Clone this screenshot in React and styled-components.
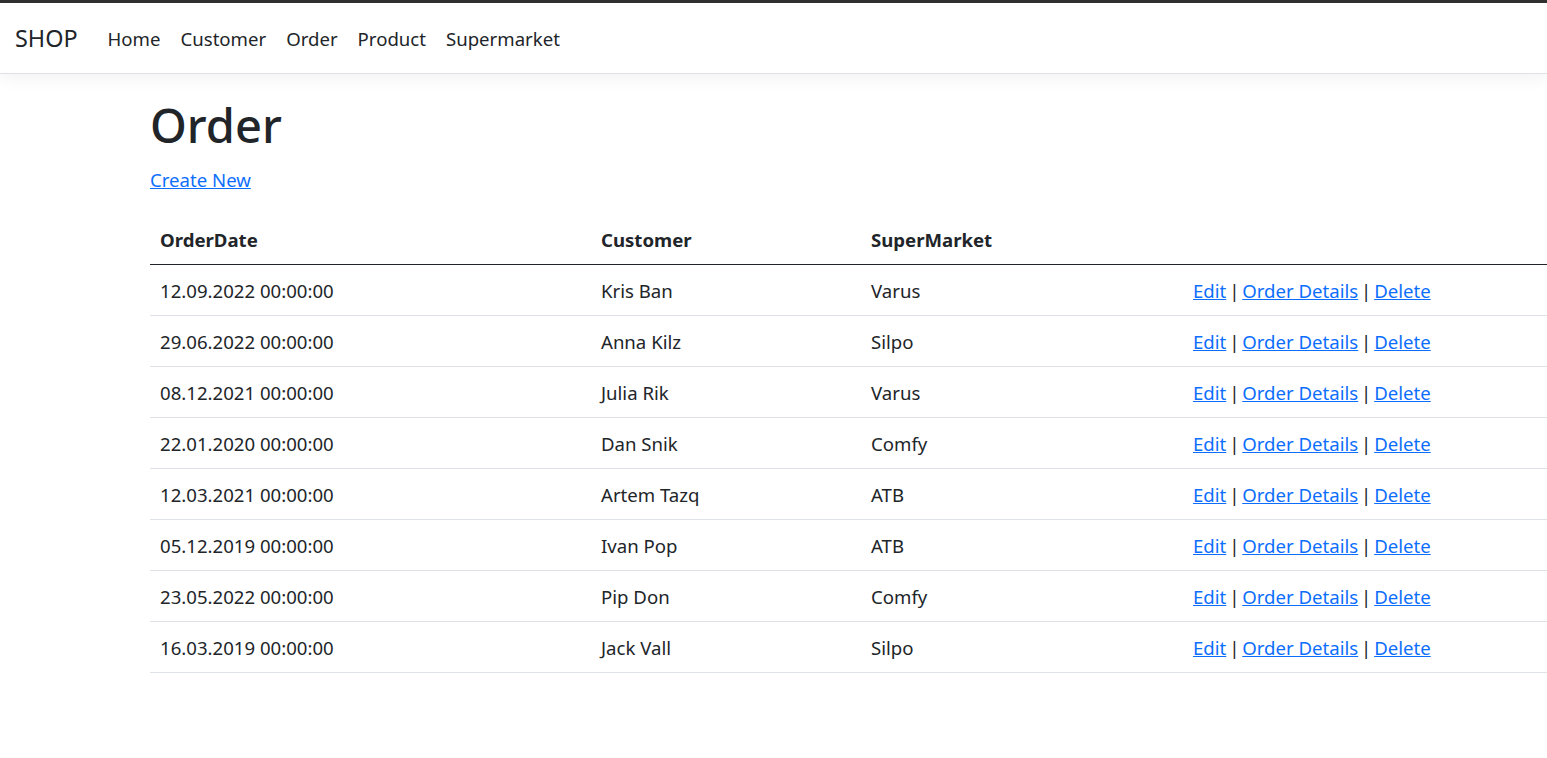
import React from "react";
import styled, { createGlobalStyle } from "styled-components";

const GlobalStyle = createGlobalStyle`
  html, body {
    margin: 0;
    padding: 0;
    background: #fff;
  }
  *, *::before, *::after {
    box-sizing: border-box;
  }
  body {
    font-family: "Segoe UI", "Noto Sans", "Open Sans", sans-serif;
    font-size: 18.6px;
    line-height: 30px;
    color: #212529;
    border-top: 3px solid #2f2f2f;
  }
`

const Navbar = styled.header`
  display: flex;
  align-items: center;
  height: 71px;
  padding: 1px 15px 0;
  background: #fff;
  border-bottom: 1px solid #dee2e6;
  box-shadow: 0 5px 15px rgba(0, 0, 0, 0.05);
  margin-bottom: 20px;
`

const Brand = styled.a`
  font-size: 23.4px;
  line-height: 37px;
  color: #212529;
  text-decoration: none;
  margin-right: 20px;
`

const NavList = styled.nav`
  display: flex;
  flex-direction: row;
`

const NavLink = styled.a`
  padding: 10px;
  color: #212529;
  text-decoration: none;
`

const Main = styled.main`
  padding-left: 150px;
  padding-top: 1px;
`

const Title = styled.h1`
  margin: 0 0 10px;
  font-size: 47px;
  font-weight: 500;
  line-height: 60px;
`

const Para = styled.p`
  margin: 0 0 20px;
`

const Link = styled.a`
  color: #0d6efd;
  text-decoration: underline;
  word-spacing: normal;
  cursor: pointer;
`

const Table = styled.table`
  width: 100%;
  border-collapse: collapse;
  table-layout: fixed;
`

const Th = styled.th`
  text-align: left;
  font-weight: 700;
  padding: 10px 10px 9px;
  width: ${p => p.$w || "auto"};
  border-bottom: 1px solid #212529;
`

const Td = styled.td`
  padding: 11px 10px 9px;
  border-bottom: 1px solid #dee2e6;
  vertical-align: top;
  white-space: nowrap;
  word-spacing: ${p => (p.$actions ? "-2px" : "normal")};
`

const Sep = styled.span`
  color: #212529;
`

const orders = [
  ["12.09.2022 00:00:00", "Kris Ban", "Varus"],
  ["29.06.2022 00:00:00", "Anna Kilz", "Silpo"],
  ["08.12.2021 00:00:00", "Julia Rik", "Varus"],
  ["22.01.2020 00:00:00", "Dan Snik", "Comfy"],
  ["12.03.2021 00:00:00", "Artem Tazq", "ATB"],
  ["05.12.2019 00:00:00", "Ivan Pop", "ATB"],
  ["23.05.2022 00:00:00", "Pip Don", "Comfy"],
  ["16.03.2019 00:00:00", "Jack Vall", "Silpo"],
]

export default function App() {
  return (
    <>
      <GlobalStyle />
      <Navbar>
        <Brand href="#">SHOP</Brand>
        <NavList>
          <NavLink href="#">Home</NavLink>
          <NavLink href="#">Customer</NavLink>
          <NavLink href="#">Order</NavLink>
          <NavLink href="#">Product</NavLink>
          <NavLink href="#">Supermarket</NavLink>
        </NavList>
      </Navbar>
      <Main>
        <Title>Order</Title>
        <Para>
          <Link>Create New</Link>
        </Para>
        <Table>
          <thead>
            <tr>
              <Th $w="441px">OrderDate</Th>
              <Th $w="270px">Customer</Th>
              <Th $w="322px">SuperMarket</Th>
              <Th></Th>
            </tr>
          </thead>
          <tbody>
            {orders.map((o, i) => (
              <tr key={i}>
                <Td>{o[0]}</Td>
                <Td>{o[1]}</Td>
                <Td>{o[2]}</Td>
                <Td $actions>
                  <Link>Edit</Link> <Sep>|</Sep> <Link>Order Details</Link> <Sep>|</Sep> <Link>Delete</Link>
                </Td>
              </tr>
            ))}
          </tbody>
        </Table>
      </Main>
    </>
  )
}
